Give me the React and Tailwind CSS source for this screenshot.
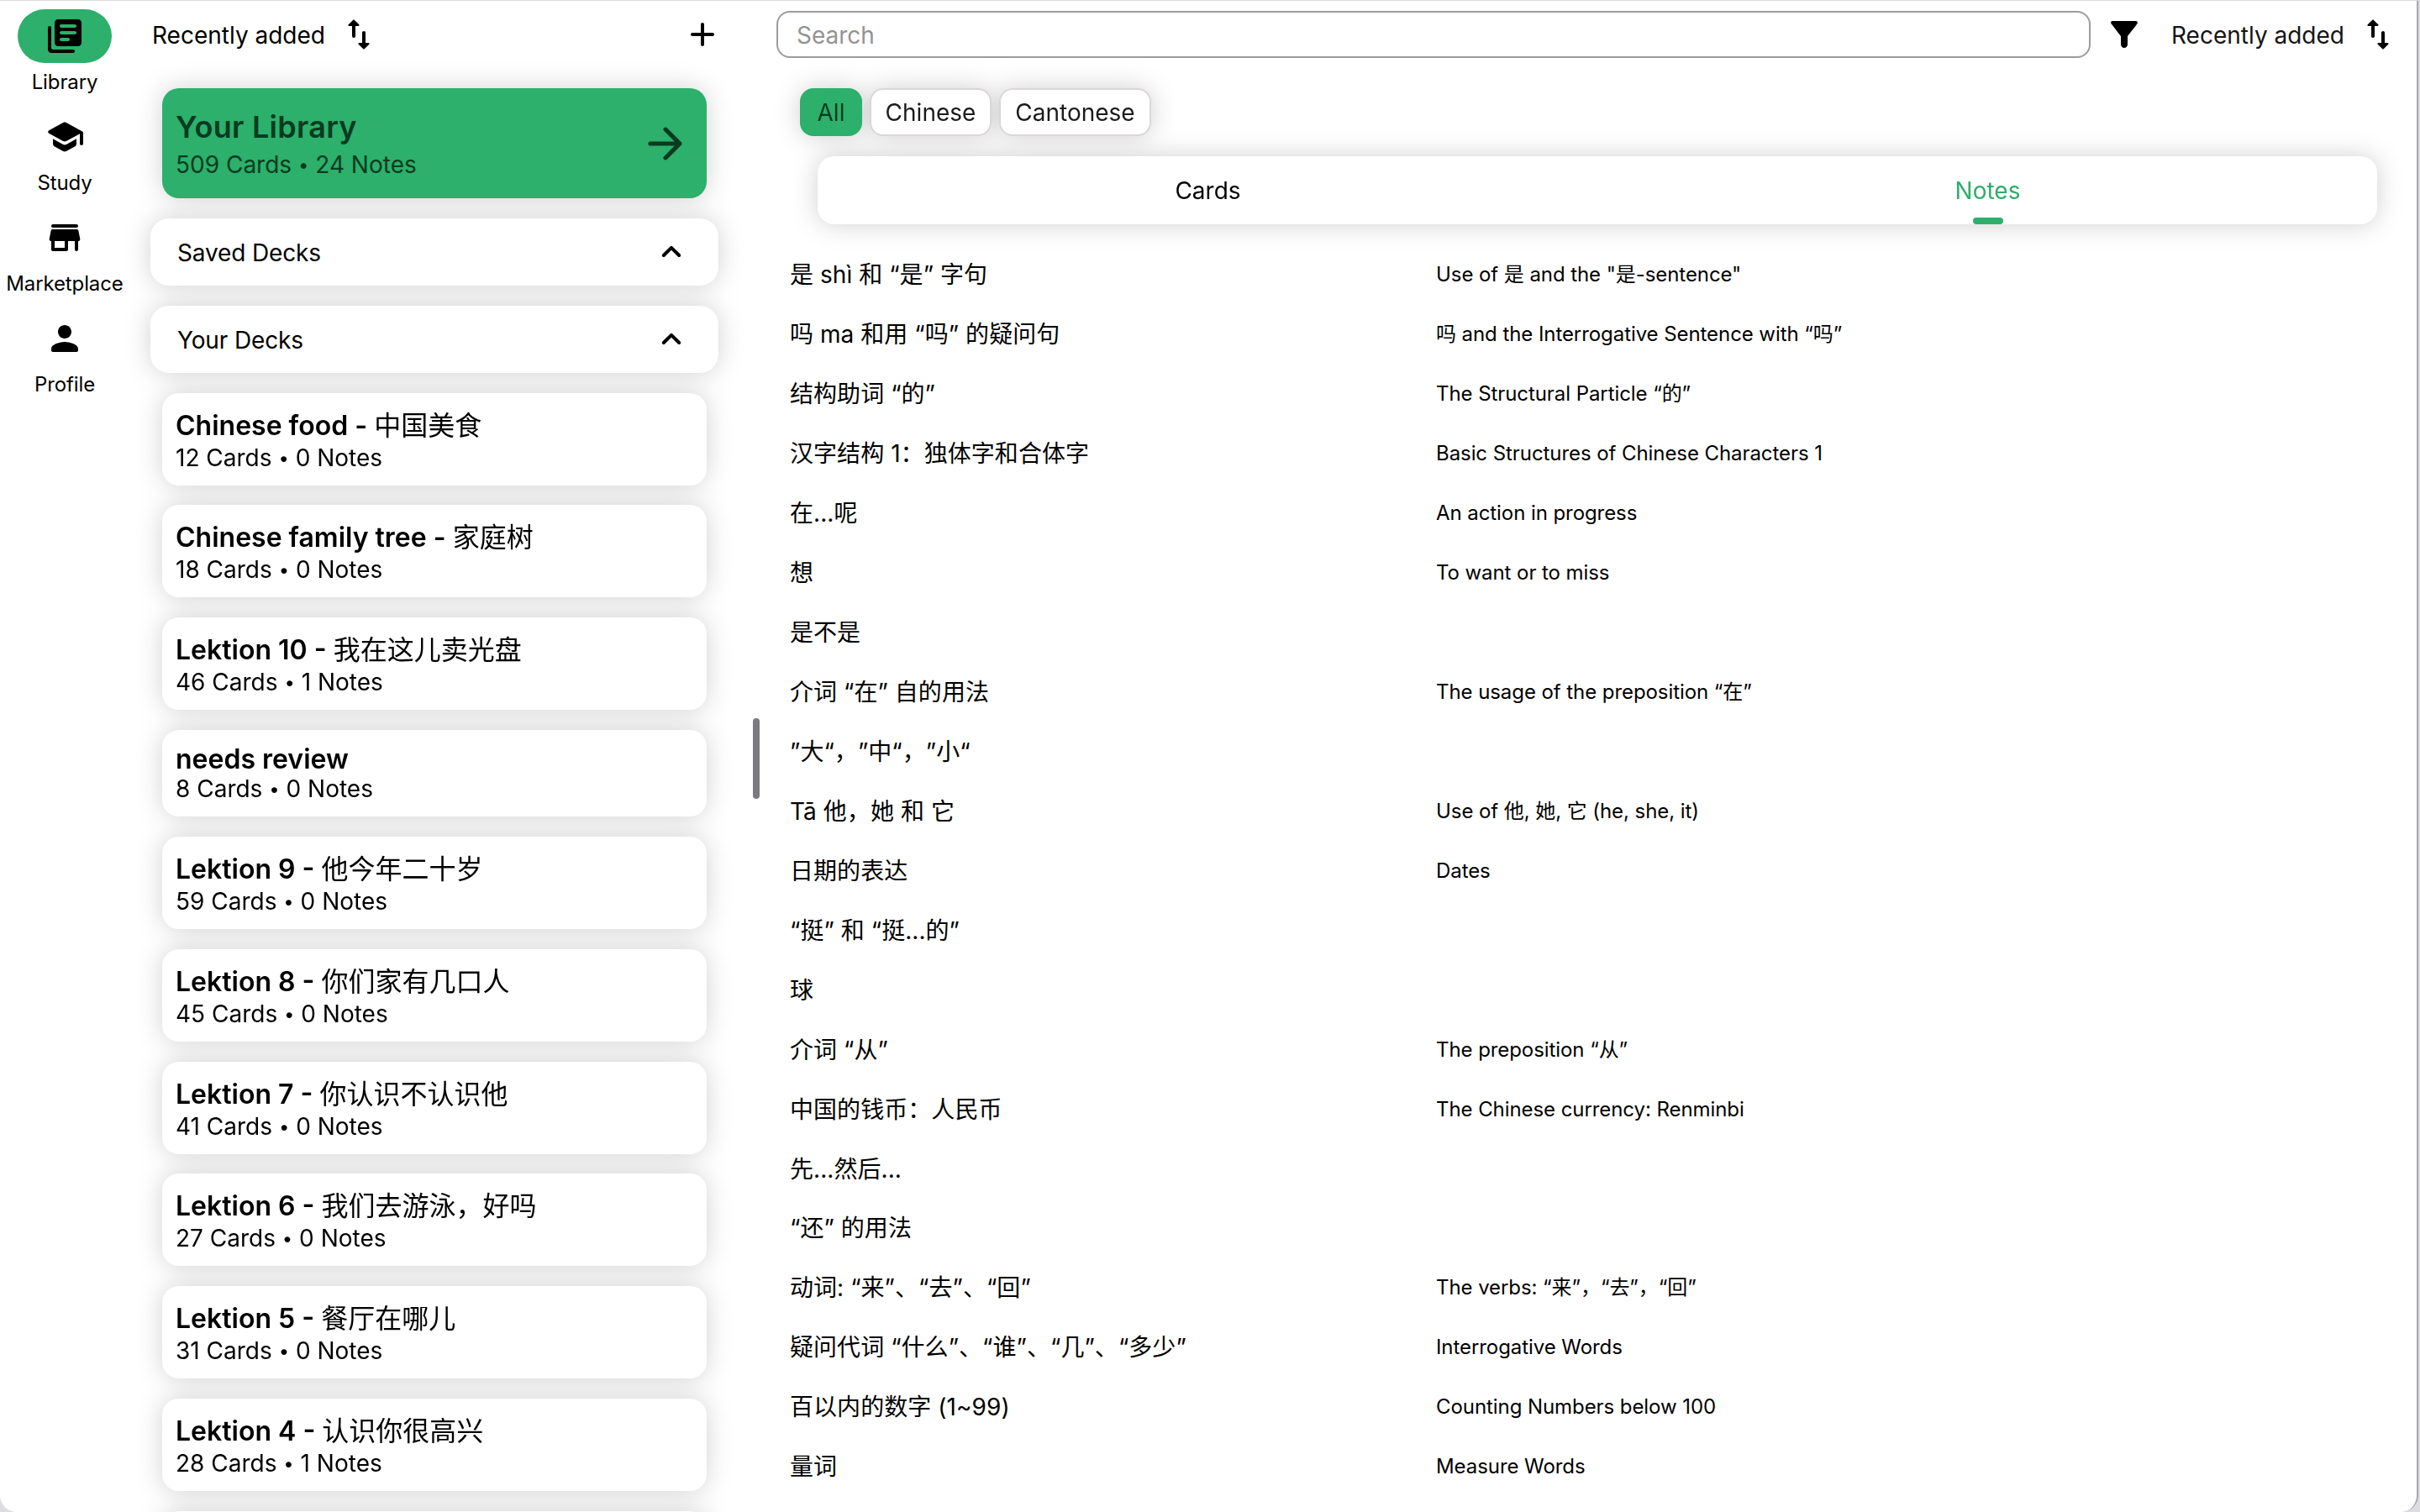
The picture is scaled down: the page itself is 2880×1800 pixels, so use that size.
import React from "react";

const ICONS = {
  library:
    "M3 6c-.55 0-1 .45-1 1v13c0 1.1.9 2 2 2h13c.55 0 1-.45 1-1s-.45-1-1-1H5c-.55 0-1-.45-1-1V7c0-.55-.45-1-1-1zm17-4H8c-1.1 0-2 .9-2 2v12c0 1.1.9 2 2 2h12c1.1 0 2-.9 2-2V4c0-1.1-.9-2-2-2zm-2 9h-8c-.55 0-1-.45-1-1s.45-1 1-1h8c.55 0 1 .45 1 1s-.45 1-1 1zm-4 4h-4c-.55 0-1-.45-1-1s.45-1 1-1h4c.55 0 1 .45 1 1s-.45 1-1 1zm4-8h-8c-.55 0-1-.45-1-1s.45-1 1-1h8c.55 0 1 .45 1 1s-.45 1-1 1z",
  study:
    "M5 13.18v2.81c0 .73.4 1.41 1.04 1.76l5 2.73c.6.33 1.32.33 1.92 0l5-2.73c.64-.35 1.04-1.03 1.04-1.76v-2.81l-6.04 3.3c-.6.33-1.32.33-1.92 0L5 13.18zm6.04-9.66l-8.43 4.6c-.69.38-.69 1.38 0 1.76l8.43 4.6c.6.33 1.32.33 1.92 0L21 10.09V16c0 .55.45 1 1 1s1-.45 1-1V9.59c0-.37-.2-.7-.52-.88l-9.52-5.19c-.6-.32-1.32-.32-1.92 0z",
  store:
    "M5 6h14c.55 0 1-.45 1-1s-.45-1-1-1H5c-.55 0-1 .45-1 1s.45 1 1 1zm15.16 1.8c-.09-.46-.5-.8-.98-.8H4.82c-.48 0-.89.34-.98.8l-1 5c-.12.62.35 1.2.98 1.2H4v5c0 .55.45 1 1 1h8c.55 0 1-.45 1-1v-5h4v5c0 .55.45 1 1 1s1-.45 1-1v-5h.18c.63 0 1.1-.58.98-1.2l-1-5zM12 18H6v-4h6v4z",
  person:
    "M12 12c2.21 0 4-1.79 4-4s-1.79-4-4-4-4 1.79-4 4 1.79 4 4 4zm0 2c-2.67 0-8 1.34-8 4v1c0 .55.45 1 1 1h14c.55 0 1-.45 1-1v-1c0-2.66-5.33-4-8-4z",
  sort: "M16 17.01V11c0-.55-.45-1-1-1s-1 .45-1 1v6.01h-1.79c-.45 0-.67.54-.35.85l2.79 2.78c.2.19.51.19.71 0l2.79-2.78c.32-.31.09-.85-.35-.85H16zM8.65 3.35L5.86 6.14c-.32.31-.1.85.35.85H8V13c0 .55.45 1 1 1s1-.45 1-1V6.99h1.79c.45 0 .67-.54.35-.85L9.35 3.35c-.19-.19-.51-.19-.7 0z",
  plus: "M18 13h-5v5c0 .55-.45 1-1 1s-1-.45-1-1v-5H6c-.55 0-1-.45-1-1s.45-1 1-1h5V6c0-.55.45-1 1-1s1 .45 1 1v5h5c.55 0 1 .45 1 1s-.45 1-1 1z",
  arrow:
    "M5 13h11.17l-4.88 4.88c-.39.39-.39 1.03 0 1.42.39.39 1.02.39 1.41 0l6.59-6.59c.39-.39.39-1.02 0-1.41l-6.58-6.6c-.39-.39-1.02-.39-1.41 0-.39.39-.39 1.02 0 1.41L16.17 11H5c-.55 0-1 .45-1 1s.45 1 1 1z",
  chevron:
    "M11.29 8.71L6.7 13.3c-.39.39-.39 1.02 0 1.41.39.39 1.02.39 1.41 0L12 10.83l3.88 3.88c.39.39 1.02.39 1.41 0 .39-.39.39-1.02 0-1.41L12.7 8.71c-.38-.39-1.02-.39-1.41 0z",
  filter:
    "M4.25 5.61C6.57 8.59 10 13 10 13v5c0 1.1.9 2 2 2s2-.9 2-2v-5s3.43-4.41 5.74-7.39c.51-.66.04-1.61-.79-1.61H5.04c-.83 0-1.3.95-.79 1.61z",
};

function Icon({ name, className = "size-12" }) {
  return (
    <svg viewBox="0 0 24 24" fill="currentColor" className={`shrink-0 ${className}`}>
      <path d={ICONS[name]} />
    </svg>
  );
}

const NAV = [
  { icon: "library", label: "Library", active: true },
  { icon: "study", label: "Study" },
  { icon: "store", label: "Marketplace" },
  { icon: "person", label: "Profile" },
];

const DECKS = [
  { name: "Chinese food - ", zh: "中国美食", cards: 12, notes: 0 },
  { name: "Chinese family tree - ", zh: "家庭树", cards: 18, notes: 0 },
  { name: "Lektion 10 - ", zh: "我在这儿卖光盘", cards: 46, notes: 1 },
  { name: "needs review", zh: "", cards: 8, notes: 0 },
  { name: "Lektion 9 - ", zh: "他今年二十岁", cards: 59, notes: 0 },
  { name: "Lektion 8 - ", zh: "你们家有几口人", cards: 45, notes: 0 },
  { name: "Lektion 7 - ", zh: "你认识不认识他", cards: 41, notes: 0 },
  { name: "Lektion 6 - ", zh: "我们去游泳，好吗", cards: 27, notes: 0 },
  { name: "Lektion 5 - ", zh: "餐厅在哪儿", cards: 31, notes: 0 },
  { name: "Lektion 4 - ", zh: "认识你很高兴", cards: 28, notes: 1 },
];

const NOTES = [
  ["是 shì 和 “是” 字句", 'Use of 是 and the "是-sentence"'],
  ["吗 ma 和用 “吗” 的疑问句", "吗 and the Interrogative Sentence with “吗”"],
  ["结构助词 “的”", "The Structural Particle “的”"],
  ["汉字结构 1：独体字和合体字", "Basic Structures of Chinese Characters 1"],
  ["在...呢", "An action in progress"],
  ["想", "To want or to miss"],
  ["是不是", ""],
  ["介词 “在” 自的用法", "The usage of the preposition “在”"],
  ["”大“，”中“，”小“", ""],
  ["Tā 他，她 和 它", "Use of 他, 她, 它 (he, she, it)"],
  ["日期的表达", "Dates"],
  ["“挺” 和 “挺...的”", ""],
  ["球", ""],
  ["介词 “从”", "The preposition “从”"],
  ["中国的钱币：人民币", "The Chinese currency: Renminbi"],
  ["先...然后...", ""],
  ["“还” 的用法", ""],
  ["动词: “来”、“去”、“回”", "The verbs: “来”，“去”，“回”"],
  ["疑问代词 “什么”、“谁”、“几”、“多少”", "Interrogative Words"],
  ["百以内的数字 (1~99)", "Counting Numbers below 100"],
  ["量词", "Measure Words"],
];

function Counts({ cards, notes }) {
  return (
    <>
      {cards} Cards <span className="align-[2px] text-[22px] leading-none">•</span> {notes} Notes
    </>
  );
}

function NavRail() {
  return (
    <nav className="flex w-[154px] shrink-0 flex-col pt-[10px]">
      {NAV.map(({ icon, label, active }) => (
        <div key={label} className="flex h-[120px] flex-col items-center">
          <div
            className={`flex h-16 w-28 items-center justify-center rounded-full ${active ? "bg-[#2cb06b]" : ""}`}
          >
            <Icon name={icon} />
          </div>
          <span className="mt-[7px] text-2xl leading-8 tracking-[-0.005em]">{label}</span>
        </div>
      ))}
    </nav>
  );
}

function SectionHeader({ title }) {
  return (
    <div className="flex h-20 shrink-0 items-center justify-between rounded-[22px] bg-white pr-8 pl-8">
      <span className="pt-[2px] tracking-[-0.005em]">{title}</span>
      <Icon name="chevron" />
    </div>
  );
}

function DeckCard({ deck }) {
  return (
    <div
      className={`mx-[14px] shrink-0 rounded-[20px] bg-white pt-4 pl-4 ${deck.zh ? "h-[110px]" : "h-[103px]"}`}
    >
      <div
        className={`text-[32px] font-semibold whitespace-pre ${deck.zh ? "leading-[45px]" : "leading-[38px]"}`}
      >
        {deck.name}
        <span className="font-normal">{deck.zh}</span>
      </div>
      <div className="leading-[33px]">
        <Counts cards={deck.cards} notes={deck.notes} />
      </div>
    </div>
  );
}

function DeckPanel() {
  return (
    <section className="flex w-[742px] shrink-0 flex-col">
      <div className="flex h-[80px] shrink-0 items-center pr-[36px] pl-[27px]">
        <span className="pt-[2px]">Recently added</span>
        <Icon name="sort" className="ml-[16px] size-12" />
        <Icon name="plus" className="ml-auto size-12" />
      </div>
      <div className="mt-[24px] ml-[25px] flex w-[676px] shrink-0 flex-col gap-[23.85px] self-start [filter:drop-shadow(0_0_15px_rgba(0,0,0,0.18))]">
        <div className="mx-[14px] flex h-[131px] shrink-0 items-center justify-between rounded-[20px] bg-[#2cb06b] pr-[18px] pl-4 text-[#073b20]">
          <div className="pt-[2px]">
            <div className="text-[36px] leading-[48px] font-semibold tracking-[0.008em]">Your Library</div>
            <div className="leading-[42px]">
              <Counts cards={509} notes={24} />
            </div>
          </div>
          <Icon name="arrow" className="size-[62px]" />
        </div>
        <SectionHeader title="Saved Decks" />
        <SectionHeader title="Your Decks" />
        {DECKS.map((deck) => (
          <DeckCard key={deck.name} deck={deck} />
        ))}
        <div className="mx-[14px] h-[110px] shrink-0 rounded-[20px] bg-white" />
      </div>
    </section>
  );
}

function NotesPanel() {
  return (
    <section className="flex flex-1 flex-col pl-5">
      <div className="flex h-[80px] shrink-0 items-center">
        <div className="flex h-14 w-[1564px] items-center rounded-2xl border-2 border-[#9c9c9c] pt-[2px] pl-[22px] text-[#939393]">
          Search
        </div>
        <Icon name="filter" className="ml-4 size-12" />
        <span className="ml-[32px] pt-[2px] text-[#151517]">Recently added</span>
        <Icon name="sort" className="ml-[16px] size-12" />
      </div>
      <div className="mt-[24px] flex shrink-0 flex-col [filter:drop-shadow(0_0_15px_rgba(0,0,0,0.19))]">
        <div className="ml-[28px] flex h-[57px] gap-[9px] text-[#1b1b1d]">
          <div className="flex w-[74px] items-center justify-center rounded-2xl bg-[#2cb06b] pt-px text-[#073b20]">
            All
          </div>
          <div className="flex w-[145px] items-center justify-center rounded-2xl border-2 border-[#dbd6d8] bg-white pt-px">
            Chinese
          </div>
          <div className="flex w-[181px] items-center justify-center rounded-2xl border-2 border-[#dbd6d8] bg-white pt-px">
            Cantonese
          </div>
        </div>
        <div className="mt-6 ml-[49px] grid h-[81px] w-[1856px] grid-cols-2 rounded-[20px] bg-white">
          <div className="flex items-center justify-center pt-px pl-px">Cards</div>
          <div className="flex flex-col items-center justify-end pl-px text-[#2cae6a]">
            <span className="leading-[64px]">Notes</span>
            <span className="h-2 w-9 rounded-full bg-[#2cb06b]" />
          </div>
        </div>
      </div>
      <div className="mt-[25px] flex flex-col pl-[16px] [text-spacing-trim:space-all]">
        {NOTES.map(([title, summary]) => (
          <div key={title} className="flex h-[70.95px] shrink-0 items-center">
            <span className="w-[769px] tracking-[0.002em]">{title}</span>
            <span className="text-2xl tracking-[-0.003em]">{summary}</span>
          </div>
        ))}
      </div>
    </section>
  );
}

export default function App() {
  return (
    <div
      lang="zh-CN"
      className="flex h-[1800px] w-[2880px] overflow-hidden bg-[#dcdce1] pt-px font-['Inter','Noto_Sans_CJK_SC',sans-serif] text-[28px] leading-[40px] text-black"
    >
      <div className="flex w-[2878px] overflow-hidden rounded-b-[20px] border-r-2 border-[#a9a9ac] bg-white">
        <NavRail />
        <DeckPanel />
        <div className="flex w-2 shrink-0 items-center">
          <div className="mt-[5px] h-24 w-2 rounded-full bg-[#7b7982]" />
        </div>
        <NotesPanel />
      </div>
    </div>
  );
}
